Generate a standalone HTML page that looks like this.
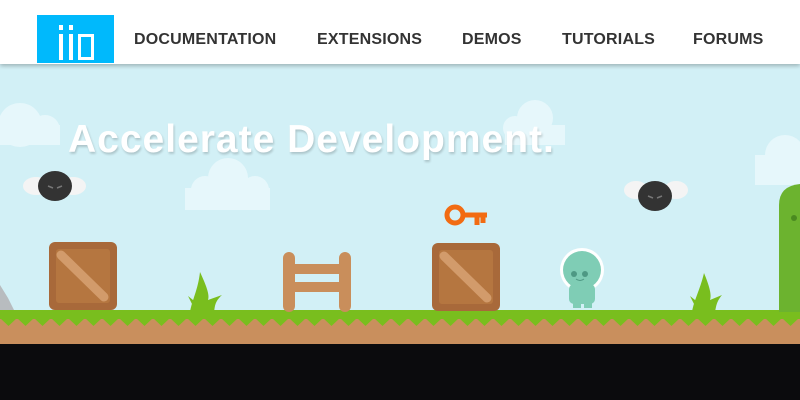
<!DOCTYPE html>
<html><head><style>
*{margin:0;padding:0}
body{width:800px;height:400px;overflow:hidden;background:#0b0b0d;font-family:"Liberation Sans",sans-serif;position:relative}
#hdr{position:absolute;left:0;top:0;width:800px;height:64px;background:#fff;box-shadow:0 2px 4px rgba(0,0,0,.25);z-index:5}
#logo{position:absolute;left:37px;top:15px;width:77px;height:48px;background:#00b9fc}
.nav{position:absolute;top:31px;font-weight:bold;font-size:16px;color:#333;letter-spacing:.2px}
h1{position:absolute;left:68px;top:118px;font-size:39px;color:#fff;font-weight:bold;letter-spacing:1px;text-shadow:1px 2px 2px rgba(0,0,0,.18);z-index:3}
</style></head><body>
<svg width="800" height="400" style="position:absolute;left:0;top:0">
<defs>
<pattern id="zz" x="0" y="318" width="17" height="10" patternUnits="userSpaceOnUse"><path d="M0 0 L8.5 8 L17 0 Z" fill="#79be1e"/></pattern>
</defs>
<rect x="0" y="64" width="800" height="250" fill="#d2f0f6"/>
<g fill="#e6f7fb">
<circle cx="20" cy="125" r="22"/><circle cx="45" cy="130" r="15"/><rect x="0" y="125" width="60" height="20"/>
<circle cx="228" cy="178" r="20"/><circle cx="205" cy="190" r="14"/><circle cx="255" cy="190" r="14"/><rect x="185" y="188" width="85" height="22"/>
<circle cx="535" cy="118" r="18"/><circle cx="515" cy="128" r="12"/><rect x="505" y="125" width="60" height="20"/>
<circle cx="785" cy="155" r="20"/><rect x="755" y="155" width="45" height="30"/>
</g>
<rect x="0" y="310" width="800" height="34" fill="#c98f5d"/>
<rect x="0" y="310" width="800" height="9" fill="#79be1e"/>
<rect x="0" y="318" width="800" height="10" fill="url(#zz)"/>
<!-- crates -->
<g><rect x="49" y="242" width="68" height="68" rx="6" fill="#a8693a"/><rect x="56" y="249" width="54" height="54" rx="3" fill="#b57640"/><line x1="61" y1="255" x2="104" y2="297" stroke="#d29b6b" stroke-width="9" stroke-linecap="round"/></g>
<g><rect x="432" y="243" width="68" height="68" rx="6" fill="#a8693a"/><rect x="439" y="250" width="54" height="54" rx="3" fill="#b57640"/><line x1="444" y1="256" x2="487" y2="298" stroke="#d29b6b" stroke-width="9" stroke-linecap="round"/></g>
<!-- fence -->
<g fill="#c98e5b"><rect x="283" y="252" width="12" height="60" rx="6"/><rect x="339" y="252" width="12" height="60" rx="6"/><rect x="293" y="264" width="48" height="10"/><rect x="293" y="282" width="48" height="10"/></g>
<!-- grass tufts -->
<path d="M190 312 C192 300 198 290 200 272 C206 285 210 295 208 300 L222 295 C214 302 215 308 214 312 Z M188 296 L198 304 L196 312 Z" fill="#79be1e"/>
<path d="M692 312 C694 300 700 290 704 273 C709 285 712 295 710 300 L722 295 C716 302 716 308 715 312 Z M690 296 L700 304 L698 312 Z" fill="#79be1e"/>
<!-- rock -->
<path d="M0 285 L8 298 L14 310 L0 310 Z" fill="#b8bcbf"/>
<!-- key -->
<g fill="none" stroke="#f26b12" stroke-width="5"><circle cx="455" cy="215" r="8"/><path d="M462 215 H487 M477 215 V225 M483 215 V223"/></g>
<!-- alien -->
<g><circle cx="582" cy="270" r="22" fill="#fff"/><circle cx="582" cy="270" r="19" fill="#7fcdb5"/><rect x="569" y="284" width="26" height="20" rx="5" fill="#7fcdb5"/><rect x="573" y="298" width="8" height="10" fill="#7fcdb5"/><rect x="584" y="298" width="8" height="10" fill="#7fcdb5"/><circle cx="574" cy="274" r="3" fill="#4e9984"/><circle cx="585" cy="274" r="3" fill="#4e9984"/><path d="M576 279 Q580 282 584 279" stroke="#4e9984" fill="none"/></g>
<!-- flies -->
<g><ellipse cx="36" cy="186" rx="13" ry="9" fill="#f4f4f4"/><ellipse cx="73" cy="186" rx="13" ry="9" fill="#f4f4f4"/><ellipse cx="55" cy="186" rx="17" ry="15" fill="#333"/><path d="M48 186 L53 188 M62 186 L57 188" stroke="#777" stroke-width="1.5"/></g>
<g><ellipse cx="636" cy="190" rx="12" ry="9" fill="#f4f4f4"/><ellipse cx="676" cy="190" rx="12" ry="9" fill="#f4f4f4"/><ellipse cx="655" cy="196" rx="17" ry="15" fill="#333"/><path d="M648 196 L653 198 M662 196 L657 198" stroke="#777" stroke-width="1.5"/></g>
<!-- green pillar -->
<path d="M779 312 V205 Q779 186 800 184 V312 Z" fill="#6cb32f"/><circle cx="794" cy="218" r="3" fill="#4a8a20"/>
</svg>
<div id="hdr">
<div id="logo"><svg width="77" height="48"><g fill="#fff"><rect x="22" y="10" width="4" height="5"/><rect x="22" y="19" width="4" height="26"/><rect x="32" y="10" width="4" height="5"/><rect x="32" y="19" width="4" height="26"/><path d="M41 19 H57 V45 H41 Z M44 22 V42 H54 V22 Z" fill-rule="evenodd"/></g></svg></div>
<div class="nav" style="left:134px">DOCUMENTATION</div>
<div class="nav" style="left:317px">EXTENSIONS</div>
<div class="nav" style="left:462px">DEMOS</div>
<div class="nav" style="left:562px">TUTORIALS</div>
<div class="nav" style="left:693px">FORUMS</div>
</div>
<h1>Accelerate Development.</h1>
</body></html>
